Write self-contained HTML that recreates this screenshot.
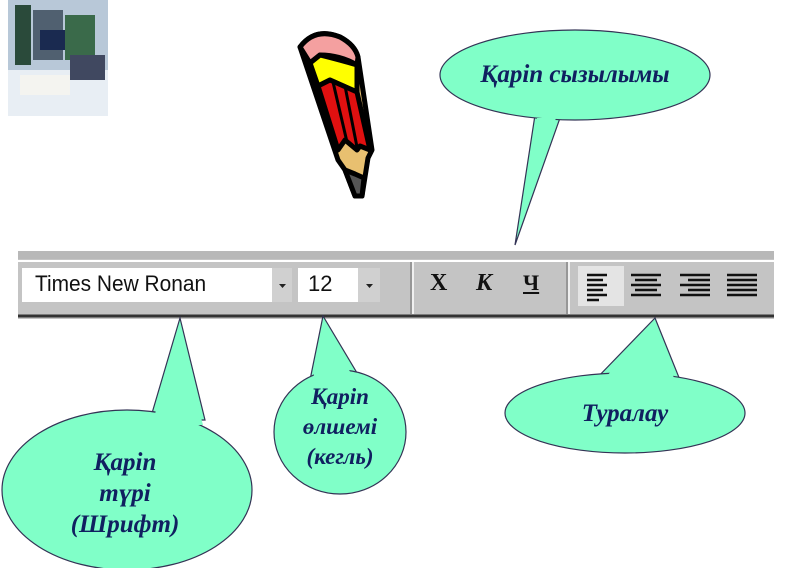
<!DOCTYPE html>
<html><head><meta charset="utf-8"><style>
body{margin:0;width:800px;height:568px;overflow:hidden;background:#fff;position:relative;font-family:"Liberation Sans",sans-serif}
.t{position:absolute;font-family:"Liberation Serif",serif;font-weight:bold;font-style:italic;font-size:25px;color:#102060;text-align:center;line-height:31px}
</style></head><body>
<svg width="800" height="568" style="position:absolute;left:0;top:0">
<rect x="8" y="0" width="100" height="116" fill="#b8c8d8"/>
<rect x="8" y="70" width="100" height="46" fill="#e8eef4"/>
<rect x="15" y="5" width="16" height="60" fill="#2a4a3a"/>
<rect x="33" y="10" width="30" height="50" fill="#506070"/>
<rect x="40" y="30" width="40" height="20" fill="#1a2a50"/>
<rect x="65" y="15" width="30" height="45" fill="#3a6a4a"/>
<rect x="70" y="55" width="35" height="25" fill="#404860"/>
<rect x="20" y="75" width="50" height="20" fill="#f4f4f0"/>
<g stroke="#000" stroke-width="5" stroke-linejoin="round">
<path d="M300 47 Q315 27 340 37 Q355 45 358 57 L372 150 L368 158 L362 196 L355 196 L345 170 L338 160 Z" fill="#e8c070"/>
<path d="M300 47 Q315 27 340 37 Q355 45 358 57 L357 65 Q340 55 320 55 L310 63 Z" fill="#f4a0a0"/>
<path d="M310 63 L320 55 Q340 60 357 65 L357 92 L330 80 L318 86 Z" fill="#ffff00"/>
<path d="M318 86 L330 80 L357 92 L370 150 L360 146 L357 150 L345 140 L338 150 Z" fill="#e01010"/>
<path d="M345 170 L355 196 L362 196 L364 178 L355 174 Z" fill="#555"/>
</g>
<path d="M333 82 L347 142 M345 86 L357 147" stroke="#000" stroke-width="3"/>
<rect x="18" y="251" width="756" height="68" fill="#c4c4c4"/>
<rect x="18" y="251" width="756" height="8" fill="#b8b8b8"/>
<line x1="18" y1="261" x2="774" y2="261" stroke="#fff" stroke-width="2"/>
<line x1="18" y1="316" x2="774" y2="316" stroke="#333" stroke-width="3"/>
<rect x="22" y="268" width="250" height="34" fill="#fff"/>
<rect x="272" y="268" width="20" height="34" fill="#d0d0d0"/>
<rect x="298" y="268" width="60" height="34" fill="#fff"/>
<rect x="358" y="268" width="22" height="34" fill="#d0d0d0"/>
<path d="M279 284 h7 l-3.5 4z M366 284 h7 l-3.5 4z" fill="#222"/>
<line x1="411" y1="262" x2="411" y2="314" stroke="#888" stroke-width="1.5"/>
<line x1="413" y1="262" x2="413" y2="314" stroke="#fff" stroke-width="1.5"/>
<line x1="567" y1="262" x2="567" y2="314" stroke="#888" stroke-width="1.5"/>
<line x1="569" y1="262" x2="569" y2="314" stroke="#fff" stroke-width="1.5"/>
<rect x="578" y="266" width="46" height="40" fill="#e4e4e4"/>
<g stroke="#111" stroke-width="2.5">
<path d="M587 275h20M587 280h16M587 285h20M587 290h16M587 295h20M587 300h12"/>
<path d="M631 275h30M635 280h22M631 285h30M635 290h22M631 295h30"/>
<path d="M680 275h30M688 280h22M680 285h30M688 290h22M680 295h30"/>
<path d="M727 275h30M727 280h30M727 285h30M727 290h30M727 295h30"/>
</g>
<g fill="#80ffc8" stroke="#335" stroke-width="1.2">
<path d="M515 245 L535 115 L560 118 Z"/>
<ellipse cx="575" cy="75" rx="135" ry="45"/>
<path d="M180 318 L150 420 L205 420 Z"/>
<ellipse cx="127" cy="490" rx="125" ry="80"/>
<path d="M323 316 L310 380 L360 378 Z"/>
<ellipse cx="340" cy="432" rx="66" ry="62"/>
<path d="M655 318 L595 380 L680 380 Z"/>
<ellipse cx="625" cy="413" rx="120" ry="40"/>
</g>
<g fill="#80ffc8">
<path d="M520 225 L537 118 L556 118 Z"/>
<path d="M178 330 L152 425 L203 425 Z"/>
<path d="M323 326 L312 385 L358 385 Z"/>
<path d="M653 328 L598 385 L677 385 Z"/>
</g>
</svg>
<div style="position:absolute;left:35px;top:271px;font-size:22px;color:#111;transform:scaleX(0.95);transform-origin:left">Times New Ronan</div>
<div style="position:absolute;left:308px;top:271px;font-size:22px;color:#111">12</div>
<div style="position:absolute;left:430px;top:270px;font:bold 24px 'Liberation Serif',serif;color:#111">Х</div>
<div style="position:absolute;left:476px;top:270px;font:bold italic 24px 'Liberation Serif',serif;color:#111">К</div>
<div style="position:absolute;left:523px;top:270px;font:bold 22px 'Liberation Serif',serif;color:#111;text-decoration:underline">Ч</div>
<div class="t" style="left:450px;top:59px;width:250px">Қаріп сызылымы</div>
<div class="t" style="left:30px;top:447px;width:190px">Қаріп<br>түрі<br>(Шрифт)</div>
<div class="t" style="left:270px;top:382px;width:140px;font-size:23px;line-height:30px">Қаріп<br>өлшемі<br>(кегль)</div>
<div class="t" style="left:540px;top:398px;width:170px">Туралау</div>
</body></html>
